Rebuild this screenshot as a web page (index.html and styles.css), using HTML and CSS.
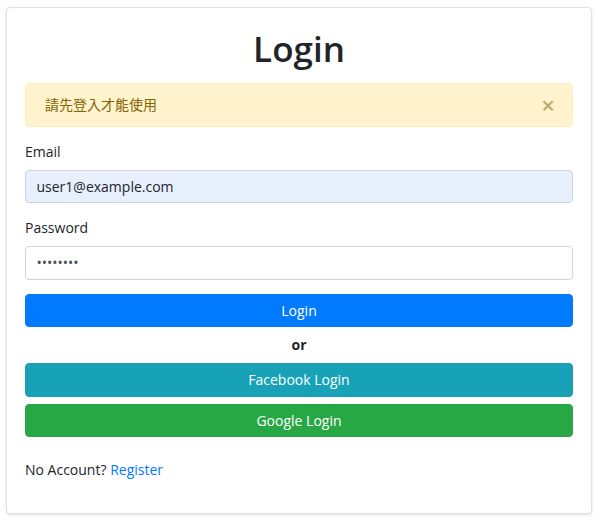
FILE: index.html
```html
<!DOCTYPE html>
<html lang="zh-Hant">
<head>
<meta charset="utf-8">
<title>Login</title>
<link rel="stylesheet" href="styles.css">
</head>
<body>
<div class="card">
  <div class="card-body">
    <h1 class="title">Login</h1>
    <div class="alert">
      <span class="alert-text">請先登入才能使用</span>
      <button class="close" type="button" aria-label="Close">&times;</button>
    </div>
    <form class="form">
      <div class="form-group">
        <label class="label" for="email">Email</label>
        <input class="input input-filled" id="email" type="email" value="user1@example.com">
      </div>
      <div class="form-group">
        <label class="label" for="password">Password</label>
        <input class="input" id="password" type="password" value="password">
      </div>
      <button class="btn btn-primary" type="button">Login</button>
      <p class="or">or</p>
      <button class="btn btn-info" type="button">Facebook Login</button>
      <button class="btn btn-success" type="button">Google Login</button>
    </form>
    <p class="footer-text">No Account? <a class="link" href="#">Register</a></p>
  </div>
</div>
</body>
</html>
```

FILE: styles.css
```css
* { box-sizing: border-box; }

html, body {
  margin: 0;
  padding: 0;
  background: #fff;
}

body {
  font-family: "Open Sans", "Noto Sans CJK TC", sans-serif;
  font-size: 14px;
  line-height: 1.5;
  color: #212529;
  padding: 7px 8px 7px 6px;
}

.card {
  border: 1px solid #dfe1e4;
  border-radius: 4px;
  box-shadow: 0 1px 3px rgba(0,0,0,0.12);
  background: #fff;
}

.card-body {
  padding: 17.5px 18px 19.5px 18px;
}

.title {
  margin: 0 0 13px 0;
  padding-top: 2px;
  text-align: center;
  font-size: 35px;
  font-weight: 600;
  line-height: 1.2;
  color: #212529;
}

.alert {
  position: relative;
  display: flex;
  align-items: center;
  height: 44px;
  padding: 10.5px 56px 10.5px 19px;
  margin-bottom: 14px;
  background: #fff3cd;
  border: 1px solid #ffeeba;
  border-radius: 4px;
  color: #856404;
  font-family: "Noto Sans CJK TC", sans-serif;
  font-size: 14px;
}

.close {
  position: absolute;
  top: 0;
  right: 0;
  height: 100%;
  padding: 0 17px;
  border: 0;
  background: transparent;
  font-family: "Open Sans", sans-serif;
  font-size: 24px;
  font-weight: 600;
  line-height: 1;
  color: #bfab6e;
  cursor: pointer;
}

.form-group {
  margin-bottom: 14px;
}

.label {
  display: block;
  margin-bottom: 8px;
  line-height: 21px;
}

.input {
  display: block;
  width: 100%;
  height: 33.5px;
  padding: 5px 10.5px;
  font-family: "Open Sans", sans-serif;
  font-size: 14px;
  color: #495057;
  background: #fff;
  border: 1px solid #ced4da;
  border-radius: 4px;
}

.input-filled {
  background: #e8f0fe;
  color: #212529;
}

.btn {
  display: block;
  width: 100%;
  height: 33.5px;
  margin-bottom: 7px;
  padding: 0 10.5px;
  border: 1px solid transparent;
  border-radius: 4px;
  font-family: "Open Sans", sans-serif;
  font-size: 14px;
  color: #fff;
  cursor: pointer;
}

.btn-primary { background: #007bff; border-color: #007bff; }
.btn-info { background: #17a2b8; border-color: #17a2b8; }
.btn-success { background: #28a745; border-color: #28a745; }

.or {
  margin: 0 0 8px 0;
  text-align: center;
  font-weight: 700;
  line-height: 21px;
}

.footer-text {
  margin: 21.5px 0 14px 0;
  line-height: 21px;
}

.link {
  color: #007bff;
  text-decoration: none;
}
```
